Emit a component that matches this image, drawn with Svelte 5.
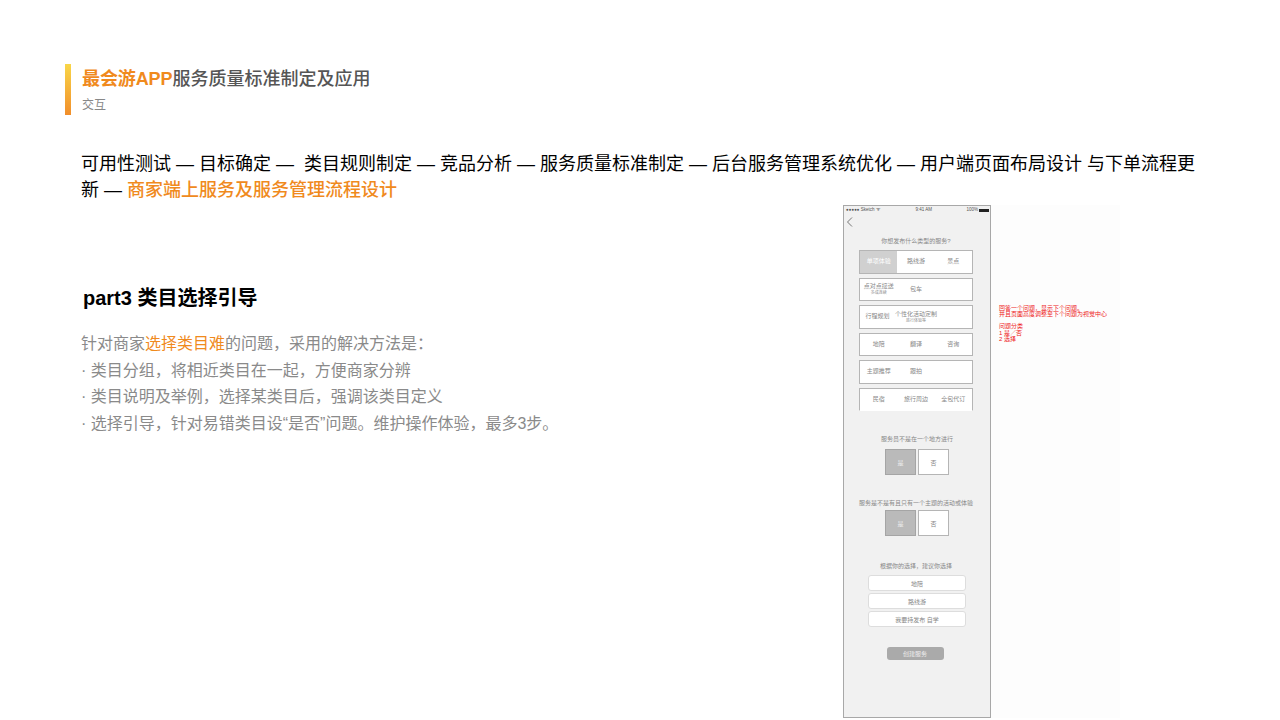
<script>
const cats = [
	{ items: ['单项体验', '路线游', '景点'], active: 0 },
	{ items: ['点对点接送', '包车'], sub: '多成连续' },
	{ items: ['行程规划', '个性化活动定制'], sub2: '旅行体验等' },
	{ items: ['地陪', '翻译', '咨询'] },
	{ items: ['主题推荐', '跟拍'] },
	{ items: ['民宿', '旅行周边', '全包代订'] }
]
const suggests = ['地陪', '路线游', '我要持发布 自学']
</script>

<div class="page">
	<header class="head">
		<div class="bar"></div>
		<div>
			<h1><span class="hl">最会游APP</span>服务质量标准制定及应用</h1>
			<p class="sub">交互</p>
		</div>
	</header>

	<p class="flow">可用性测试 — 目标确定 — &nbsp;类目规则制定 — 竞品分析 — 服务质量标准制定 — 后台服务管理系统优化 — 用户端页面布局设计 与下单流程更新 — <strong>商家端上服务及服务管理流程设计</strong></p>

	<div class="main">
		<section class="left">
			<h2>part3 类目选择引导</h2>
			<ul>
				<li>针对商家<span class="pick">选择类目难</span>的问题，采用的解决方法是：</li>
				<li>· 类目分组，将相近类目在一起，方便商家分辨</li>
				<li>· 类目说明及举例，选择某类目后，强调该类目定义</li>
				<li>· 选择引导，针对易错类目设“是否”问题。维护操作体验，最多3步。</li>
			</ul>
		</section>

		<div class="phone">
			<div class="status">
				<span>●●●●● Sketch ᯤ</span>
				<span>9:41 AM</span>
				<span class="batt">100% <i></i></span>
			</div>
			<svg class="back" width="7" height="10" viewBox="0 0 7 10"><path d="M6 .5 1.5 5 6 9.5" fill="none" stroke="#777" stroke-width="1"/></svg>
			<p class="q q1">你想发布什么类型的服务?</p>
			<div class="cats">
				{#each cats as row, r}
					<div class="cat" class:open={r === cats.length - 1}>
						{#each row.items as item, i}
							<span class="cell" class:on={row.active === i}>
								{item}
								{#if row.sub && i === 0}<small>{row.sub}</small>{/if}
								{#if row.sub2 && i === 1}<small>{row.sub2}</small>{/if}
							</span>
						{/each}
						{#if row.items.length === 2}<span class="cell"></span>{/if}
					</div>
				{/each}
			</div>
			<p class="q q2">服务员不是在一个地方进行</p>
			<div class="yesno first"><span class="yes">是</span><span class="no">否</span></div>
			<p class="q q3">服务是不是有且只有一个主题的活动或体验</p>
			<div class="yesno"><span class="yes">是</span><span class="no">否</span></div>
			<p class="q q4">根据你的选择，建议你选择</p>
			<div class="suggest">
				{#each suggests as s}<span>{s}</span>{/each}
			</div>
			<div class="create">创建服务</div>
		</div>

		<div class="side">
			<div class="notes">
				<p>回答一个问题，显示下个问题。<br />并且页面高度调整至下个问题为视觉中心</p>
				<p class="gap">问题分类<br />1 是／否<br />2 选择</p>
			</div>
		</div>
	</div>
</div>

<style>
:global(body) {
	margin: 0;
	background: #fff;
}

.page {
	width: 1280px;
	height: 720px;
	overflow: hidden;
	box-sizing: border-box;
	padding-top: 64px;
	font-family: "Liberation Sans", "Noto Sans CJK SC", sans-serif;
}

.head {
	display: flex;
	gap: 11px;
	padding-left: 65px;
	height: 51px;
}

.bar {
	width: 6px;
	height: 51px;
	background: linear-gradient(#f9d648, #f18e2a);
}

h1 {
	margin: 3px 0 0;
	font-size: 18px;
	line-height: 24px;
	font-weight: 500;
	color: #555;
}

.hl {
	color: #f08a1d;
	font-weight: 700;
	letter-spacing: -0.1px;
}

.sub {
	margin: 6px 0 0;
	font-size: 12px;
	line-height: 16px;
	color: #888;
}

.flow {
	margin: 36px 0 0 81px;
	width: 1120px;
	font-size: 18px;
	line-height: 26px;
	color: #000;
}

.flow strong {
	color: #f08a1d;
	font-weight: 500;
}

.main {
	display: flex;
	margin-top: 2px;
}

.left {
	width: 843px;
	padding: 80px 0 0 81px;
	box-sizing: border-box;
}

h2 {
	margin: 0 0 0 2px;
	font-size: 20px;
	line-height: 26px;
	color: #000;
	font-weight: 700;
}

ul {
	list-style: none;
	margin: 20px 0 0;
	padding: 0;
	font-size: 16px;
	line-height: 26.7px;
	color: #8a8a8a;
}

.pick {
	color: #f08a1d;
}

.phone {
	width: 148px;
	height: 513px;
	box-sizing: border-box;
	border: 1px solid #a8a8a8;
	background: #f1f1f1;
	color: #888;
	font-size: 6px;
	display: flex;
	flex-direction: column;
	align-items: center;
	flex: none;
}

.status {
	align-self: stretch;
	display: flex;
	justify-content: space-between;
	padding: 1px 1px 0 2px;
	font-size: 4.5px;
	line-height: 6px;
	color: #555;
}

.batt {
	display: flex;
	gap: 1px;
	align-items: center;
}

.batt i {
	width: 10px;
	height: 3px;
	background: #222;
}

.back {
	align-self: flex-start;
	margin: 4px 0 1px 2px;
}

.q {
	margin: 0;
	line-height: 8px;
	white-space: nowrap;
}

.q1 { margin: 9px 2px 0 0; }
.q2 { margin-top: 24px; }
.q3 { margin: 24px 2px 0 0; }
.q4 { margin: 26px 2px 0 0; }

.cats {
	margin: 5px 2px 0 0;
	display: flex;
	flex-direction: column;
	gap: 4px;
}

.cat {
	width: 114px;
	height: 23.5px;
	box-sizing: border-box;
	background: #fff;
	border: 1px solid #b5b5b5;
	display: grid;
	grid-template-columns: repeat(3, 1fr);
}

.cat.open {
	border-bottom-color: #fff;
}

.cell {
	display: flex;
	flex-direction: column;
	align-items: center;
	justify-content: center;
	white-space: nowrap;
	line-height: 7px;
}

.cell small {
	font-size: 4px;
	line-height: 5px;
}

.cell.on {
	background: #d0d0d0;
	color: #fff;
}

.yesno {
	margin-top: 3px;
	display: flex;
	gap: 2px;
}

.yesno.first {
	margin-top: 6px;
}

.yesno span {
	width: 31px;
	height: 26px;
	box-sizing: border-box;
	display: flex;
	align-items: center;
	justify-content: center;
}

.yes {
	background: #bababa;
	border: 1px solid #a5a5a5;
	color: #eee;
}

.no {
	background: #fff;
	border: 1px solid #b5b5b5;
}

.suggest {
	margin-top: 5px;
	display: flex;
	flex-direction: column;
	gap: 2px;
}

.suggest span {
	width: 98px;
	height: 16px;
	box-sizing: border-box;
	background: #fff;
	border: 1px solid #ddd;
	border-radius: 3px;
	display: flex;
	align-items: center;
	justify-content: center;
}

.create {
	margin: 20px 4px 0 0;
	width: 57px;
	height: 13px;
	background: #aaa;
	border-radius: 3px;
	color: #eee;
	display: flex;
	align-items: center;
	justify-content: center;
}

.side {
	flex: none;
	width: 129px;
	height: 513px;
	background: #fdfdfd;
	box-sizing: border-box;
	padding: 100px 0 0 8px;
}

.notes {
	font-size: 6px;
	line-height: 6.2px;
	color: #ee2020;
	white-space: nowrap;
}

.notes p {
	margin: 0;
}

.notes .gap {
	margin-top: 6px;
}
</style>
